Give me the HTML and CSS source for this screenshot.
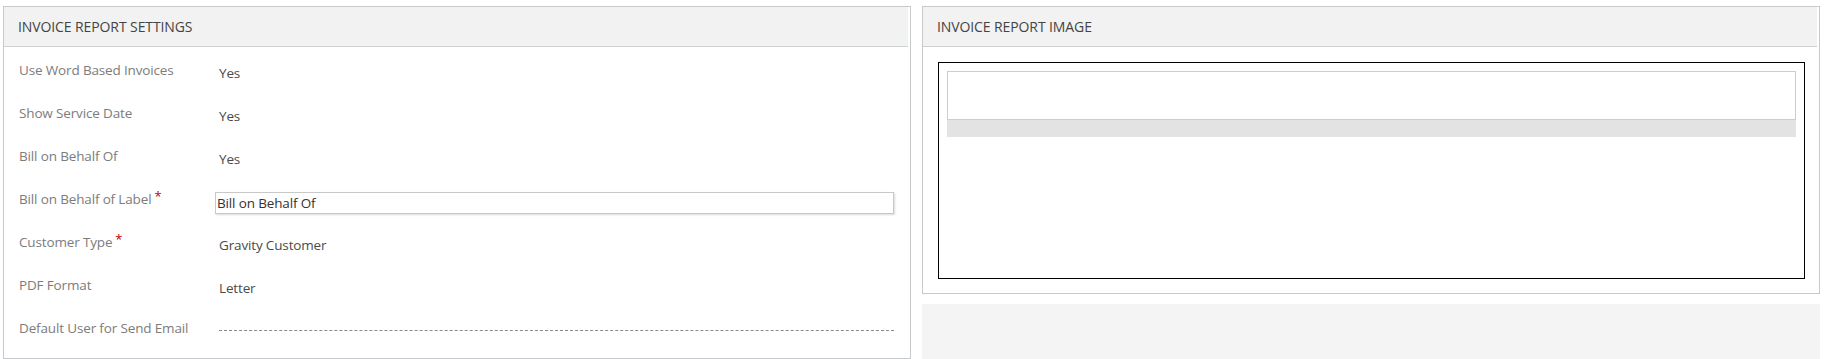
FILE: index.html
```
<!DOCTYPE html>
<html lang="en">
<head>
    <meta charset="UTF-8">
    <meta name="viewport" content="width=device-width, initial-scale=1.0">
    <title>Invoice Report</title>
    <link rel="stylesheet" href="styles.css">
</head>
<body>
    <div class="layout">
        <div class="panel settings">
            <div class="panel-head">INVOICE REPORT SETTINGS</div>
            <div class="form">
                <div class="row">
                    <div class="label">Use Word Based Invoices</div>
                    <div class="value">Yes</div>
                </div>
                <div class="row">
                    <div class="label">Show Service Date</div>
                    <div class="value">Yes</div>
                </div>
                <div class="row">
                    <div class="label">Bill on Behalf Of</div>
                    <div class="value">Yes</div>
                </div>
                <div class="row">
                    <div class="label">Bill on Behalf of Label<span class="req">*</span></div>
                    <div class="value"><div class="input">Bill on Behalf Of</div></div>
                </div>
                <div class="row">
                    <div class="label">Customer Type<span class="req">*</span></div>
                    <div class="value">Gravity Customer</div>
                </div>
                <div class="row">
                    <div class="label">PDF Format</div>
                    <div class="value">Letter</div>
                </div>
                <div class="row">
                    <div class="label">Default User for Send Email</div>
                    <div class="value"><div class="empty"></div></div>
                </div>
            </div>
        </div>

        <div class="side">
            <div class="panel image">
                <div class="panel-head">INVOICE REPORT IMAGE</div>
                <div class="frame">
                    <div class="frame-box"></div>
                    <div class="frame-bar"></div>
                </div>
            </div>
            <div class="filler"></div>
        </div>
    </div>
</body>
</html>
```

FILE: styles.css
```
body {
    margin: 0;
    padding: 6px 4px 0 3px;
    font-family: 'Open Sans', 'Segoe UI', Arial, sans-serif;
    background: white;
}
.layout {
    display: grid;
    grid-template-columns: 908px 1fr;
    gap: 11px;
}
.panel {
    border: 1px solid #c6caca;
    background: white;
}
.panel-head {
    height: 39px;
    line-height: 39px;
    margin-right: 2px;
    padding-left: 14px;
    background: #f2f2f2;
    border-bottom: 1px solid #cfd2d2;
    color: #444;
    font-size: 14px;
    letter-spacing: -0.1px;
}
.settings {
    height: 351px;
}
.form {
    padding: 1px 16px 0 15px;
}
.row {
    display: flex;
    height: 43px;
}
.label {
    width: 196px;
    padding-top: 12px;
    line-height: 20px;
    font-size: 13.5px;
    color: #7c7c7c;
    letter-spacing: -0.15px;
}
.req {
    color: #c00000;
    font-size: 13px;
    line-height: 0;
    margin-left: 3px;
    vertical-align: 3px;
}
.value {
    flex: 1;
    padding-top: 15px;
    line-height: 20px;
    font-size: 13.5px;
    color: #4a4a4a;
    letter-spacing: -0.15px;
}
.value:not(:has(.input, .empty)) {
    padding-left: 4px;
}
.input {
    height: 20px;
    line-height: 20px;
    padding-left: 1px;
    border: 1px solid #c8c8c8;
    box-shadow: 1px 1px 2px rgba(0,0,0,0.15);
    color: #333;
}
.empty {
    margin: 9px 0 0 4px;
    border-top: 1px dashed #8a8a8a;
}
.side {
    display: flex;
    flex-direction: column;
    gap: 10px;
}
.image {
    height: 286px;
}
.frame {
    margin: 15px 14px 0 15px;
    height: 207px;
    padding: 8px 8px 0 8px;
    border: 1px solid #000;
}
.frame-box {
    height: 47px;
    border: 1px solid #cdcdcd;
}
.frame-bar {
    height: 17px;
    background: #e3e3e3;
}
.filler {
    height: 60px;
    background: #f4f4f4;
}
```
